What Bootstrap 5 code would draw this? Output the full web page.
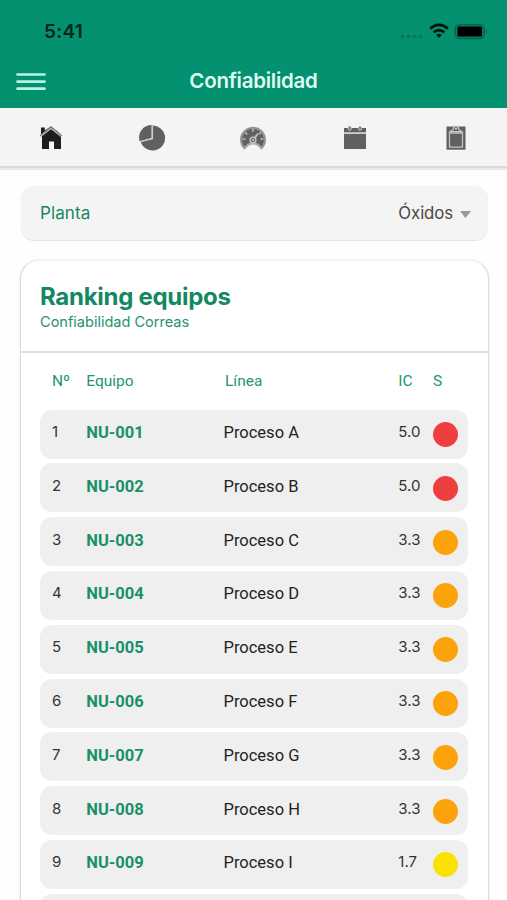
<!DOCTYPE html>
<html lang="es">
<head>
<meta charset="utf-8">
<meta name="viewport" content="width=device-width, initial-scale=1">
<title>Confiabilidad</title>
<link rel="stylesheet" href="https://cdn.jsdelivr.net/npm/bootstrap@5.3.0/dist/css/bootstrap.min.css">
<style>
:root{--green:#03916f;--ink-green:#148763}
html,body{height:900px;overflow:hidden}
body{background:#fefefe;font-family:Inter,"Liberation Sans",sans-serif;color:#222}
.app{height:900px;overflow:hidden}
.app-top{background:var(--green);height:108px}
.status{height:61px;padding:2px 19px 0 44px;color:#04241c}
.clock{font-size:19px;font-weight:600;letter-spacing:.2px;line-height:1}
.title-bar{display:grid;grid-template-columns:60px 1fr 60px;height:40px}
.title-bar h1{font-size:20.5px;font-weight:600;color:#dffaf2;line-height:1;letter-spacing:-.25px}
.burger{padding-left:16px}
.tabs{height:60px;background:#f4f4f4;border-bottom:2px solid #dadada;box-shadow:0 2px 0 #e9e9e9}
.tabs a{width:20%;height:59px}
.filter{margin:18px 19px 0 21px;height:54px;padding:2px 17px 0 19px;background:#f4f4f4;border-radius:13px;font-size:17px;letter-spacing:.1px;box-shadow:0 1px 1px #e4e4e4}
.filter .pick{color:#484848;font-size:16.8px;letter-spacing:-.1px}
.green{color:var(--ink-green)}
.panel{margin:20px 18px 0 20px;height:700px;border-radius:19px;background:#fff;border:1px solid #dcdcdc;border-top-color:#eee;box-shadow:0 0 2px #ddd}
.panel-head{height:92px;padding:21px 19px 0;border-bottom:2px solid #e0e0e0}
.panel-head h2{font-size:24px;font-weight:700;line-height:30px;letter-spacing:-.28px}
.panel-head p{font-size:14.6px;line-height:20px;letter-spacing:-.03px;color:#29916f}
.grid-row{display:grid;grid-template-columns:34.3px 137.2px 174.8px 34.6px 1fr;padding-left:12px;align-items:center}
.heads{height:56px;margin:0 19px 0.6px;font:15.5px Roboto,"Liberation Sans",sans-serif;color:#249570}
.heads .line-h{padding-left:1.5px}
.rows{gap:4.8px;padding:0 20px 0 19px}
.item{height:49px;background:#efefef;border-radius:12px;font-family:Roboto,"Liberation Sans",sans-serif;font-size:16.5px;line-height:20px;padding-bottom:2px}
.item .num,.item .ic{font-family:Inter,sans-serif;font-size:15px;color:#333;padding-bottom:2px}
.item .code{font-weight:700;color:#198f6a}
.dot{width:25px;height:25px;border-radius:50%;margin-top:3px}
.red{background:#ef3e3e}.orange{background:#fca20a}.yellow{background:#fbe004}
</style>
</head>
<body>
<div class="app">
  <header class="app-top">
    <div class="status d-flex align-items-center justify-content-between">
      <span class="clock">5:41</span>
      <svg width="88" height="20" viewBox="0 0 88 20">
        <g fill="#08735a"><circle cx="2.5" cy="14.5" r="1.8"/><circle cx="8.5" cy="14.5" r="1.8"/><circle cx="14.5" cy="14.5" r="1.8"/><circle cx="20.5" cy="14.5" r="1.8"/></g>
        <g fill="none" stroke="#03150f" stroke-width="2.7"><path d="M30.1 6.6Q39 -.8 47.9 6.6"/><path d="M33.6 10.3Q39 5.9 44.4 10.3"/></g>
        <path fill="#03150f" d="M36.1 12.8Q39 10.7 41.9 12.8L39 16.1Z"/>
        <rect x="55.2" y="2.6" width="29" height="14" rx="4" fill="#057d60" stroke="#0b674f" stroke-width="1.4"/>
        <rect x="57.5" y="4.6" width="24.5" height="10" rx="1.3" fill="#000"/>
        <path d="M85.6 7.3q2.4 2.3 0 4.6z" fill="#08614b"/>
      </svg>
    </div>
    <div class="title-bar align-items-center">
      <div class="burger d-flex"><svg width="30" height="20" viewBox="0 0 30 20" stroke="#b9f3e3" stroke-width="2.7" stroke-linecap="round"><path d="M1.5 3.5h27M1.5 10.6h27M1.5 17.7h27"/></svg></div>
      <h1 class="m-0 text-center">Confiabilidad</h1>
    </div>
  </header>
  <nav class="tabs d-flex">
    <a class="d-flex align-items-center justify-content-center" href="#" aria-label="Inicio"><svg width="26" height="28" viewBox="0 0 26 28">
      <path fill="#1d1d1d" d="M3 3.5h3.8v3L13 2.2l10 8V25h-7v-7.5h-5V25H4V11.5L3 10z"/>
      <path fill="none" stroke="#b9b9b9" stroke-width="2.2" d="M2.4 12.2 13 4l10.6 8.2"/><path fill="none" stroke="#707070" stroke-width="1" d="M2 11.8 13 3.2l11 8.6"/></svg></a>
    <a class="d-flex align-items-center justify-content-center" href="#" aria-label="Gráficos"><svg width="28" height="28" viewBox="0 0 28 28">
      <path fill="#606060" d="M14 1.6A12.5 12.5 0 1 1 2.6 17.6L14 14.8z"/><path fill="#606060" d="M13.6 1V14L1.6 17.2A12.6 12.6 0 0 1 13.6 1z"/><path d="M14.4 1.5V14.8L2.4 17.7" fill="none" stroke="#cfcfcf" stroke-width="1.3"/></svg></a>
    <a class="d-flex align-items-center justify-content-center" href="#" aria-label="Indicadores"><svg width="28" height="28" viewBox="0 0 28 28">
      <path d="M5.5 24.2A12 12 0 1 1 22.5 24.2L18.8 20.7Q14 18.2 9.2 20.7Z" fill="#606060" stroke="#aaa" stroke-width="2.2"/>
      <path d="M5.5 24.2A12 12 0 1 1 22.5 24.2" fill="none" stroke="#777" stroke-width=".7"/>
      <path d="M3.5 15h3M6 8.3l2.2 2M14 4.7v3M22 8.3l-2 2M24.5 15h-3" stroke="#bbb" stroke-width="1.6"/>
      <path d="M14.3 15.7 19 9.5" stroke="#bbb" stroke-width="2"/><circle cx="14" cy="16" r="2.8" fill="#555" stroke="#c3c3c3" stroke-width="1.6"/><circle cx="14" cy="16" r="1" fill="#ddd"/></svg></a>
    <a class="d-flex align-items-center justify-content-center" href="#" aria-label="Calendario"><svg width="26" height="28" viewBox="0 0 26 28">
      <path fill="#606060" d="M2 4h22v4.6H2zM2 10h22v15H2z"/><path fill="#c9c9c9" d="M2 8.4h22v1.5H2z"/><g fill="#707070" stroke="#ccc" stroke-width="1"><rect x="6.3" y="2.3" width="2.8" height="4" rx="1.2"/><rect x="16.6" y="2.3" width="2.8" height="4" rx="1.2"/></g></svg></a>
    <a class="d-flex align-items-center justify-content-center" href="#" aria-label="Reportes"><svg width="24" height="28" viewBox="0 0 24 28">
      <path fill="#606060" d="M2.5 2.5h19v23.2h-19z"/><path fill="none" stroke="#c2c2c2" stroke-width="1.3" d="M5.5 9h13v14.2h-13z"/><path fill="#606060" stroke="#c8c8c8" stroke-width="1.2" d="M6 7.6 9.3 5.4Q9.6 2.2 12 2.2T14.7 5.4L18 7.6z"/><circle cx="12" cy="4.8" r="1.1" fill="#ccc"/></svg></a>
  </nav>
  <main>
    <div class="filter d-flex align-items-center justify-content-between">
      <span class="green">Planta</span>
      <span class="pick d-flex align-items-center">Óxidos <svg width="11" height="7" viewBox="0 0 11 7" style="margin-left:7px"><path fill="#999" d="M0 0h11L5.5 7z"/></svg></span>
    </div>
    <section class="panel">
      <div class="panel-head"><h2 class="green m-0">Ranking equipos</h2><p class="m-0">Confiabilidad Correas</p></div>
      <div class="heads grid-row"><span>Nº</span><span>Equipo</span><span class="line-h">Línea</span><span>IC</span><span>S</span></div>
      <div class="rows d-flex flex-column">
        <div class="item grid-row"><span class="num">1</span><span class="code">NU-001</span><span>Proceso A</span><span class="ic">5.0</span><span class="dot red"></span></div>
        <div class="item grid-row"><span class="num">2</span><span class="code">NU-002</span><span>Proceso B</span><span class="ic">5.0</span><span class="dot red"></span></div>
        <div class="item grid-row"><span class="num">3</span><span class="code">NU-003</span><span>Proceso C</span><span class="ic">3.3</span><span class="dot orange"></span></div>
        <div class="item grid-row"><span class="num">4</span><span class="code">NU-004</span><span>Proceso D</span><span class="ic">3.3</span><span class="dot orange"></span></div>
        <div class="item grid-row"><span class="num">5</span><span class="code">NU-005</span><span>Proceso E</span><span class="ic">3.3</span><span class="dot orange"></span></div>
        <div class="item grid-row"><span class="num">6</span><span class="code">NU-006</span><span>Proceso F</span><span class="ic">3.3</span><span class="dot orange"></span></div>
        <div class="item grid-row"><span class="num">7</span><span class="code">NU-007</span><span>Proceso G</span><span class="ic">3.3</span><span class="dot orange"></span></div>
        <div class="item grid-row"><span class="num">8</span><span class="code">NU-008</span><span>Proceso H</span><span class="ic">3.3</span><span class="dot orange"></span></div>
        <div class="item grid-row"><span class="num">9</span><span class="code">NU-009</span><span>Proceso I</span><span class="ic">1.7</span><span class="dot yellow"></span></div>
        <div class="item"></div>
      </div>
    </section>
  </main>
</div>
<script src="https://cdn.jsdelivr.net/npm/bootstrap@5.3.0/dist/js/bootstrap.bundle.min.js"></script>
</body>
</html>
